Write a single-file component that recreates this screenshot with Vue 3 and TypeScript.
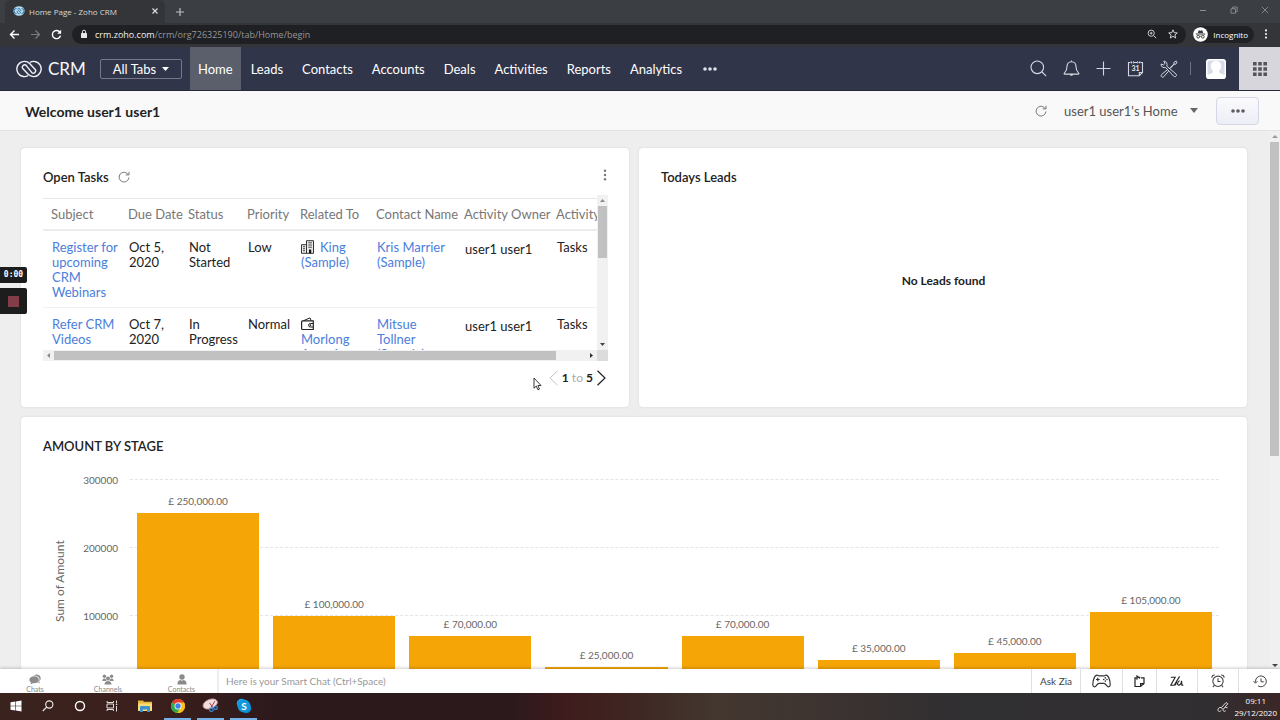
<script setup lang="ts">
interface Task {
  subject: string
  due: string
  status: string
  priority: string
  icon: 'building' | 'wallet'
  related: string
  contact: string
  owner: string
  type: string
}

interface Stage {
  label: string
  value: number
}

const tabs: string[] = ['Home', 'Leads', 'Contacts', 'Accounts', 'Deals', 'Activities', 'Reports', 'Analytics']

const columns: string[] = ['Subject', 'Due Date', 'Status', 'Priority', 'Related To', 'Contact Name', 'Activity Owner', 'Activity']

const tasks: Task[] = [
  {
    subject: 'Register for upcoming CRM Webinars',
    due: 'Oct 5, 2020',
    status: 'Not Started',
    priority: 'Low',
    icon: 'building',
    related: 'King (Sample)',
    contact: 'Kris Marrier (Sample)',
    owner: 'user1 user1',
    type: 'Tasks',
  },
  {
    subject: 'Refer CRM Videos',
    due: 'Oct 7, 2020',
    status: 'In Progress',
    priority: 'Normal',
    icon: 'wallet',
    related: 'Morlong Associates',
    contact: 'Mitsue Tollner (Sample)',
    owner: 'user1 user1',
    type: 'Tasks',
  },
]

const ticks: number[] = [300000, 200000, 100000]

const stages: Stage[] = [
  { label: '£ 250,000.00', value: 250000 },
  { label: '£ 100,000.00', value: 100000 },
  { label: '£ 70,000.00', value: 70000 },
  { label: '£ 25,000.00', value: 25000 },
  { label: '£ 70,000.00', value: 70000 },
  { label: '£ 35,000.00', value: 35000 },
  { label: '£ 45,000.00', value: 45000 },
  { label: '£ 105,000.00', value: 105000 },
]

const barHeight = (value: number): string => `${(value / 300000) * 100}%`
</script>

<template>
  <div class="screen">
    <div class="tabstrip">
      <div class="browser-tab">
        <svg width="12" height="12" viewBox="0 0 12 12">
          <ellipse cx="6" cy="6" rx="5.6" ry="4.8" fill="#b9dbef" />
          <path d="M3.6 3.4a2.6 2.6 0 1 0 0 5.2M8.4 3.4a2.6 2.6 0 1 1 0 5.2M4.4 4.2l3.4 3.6M5 3.2c1.4 0 3 1.6 3 3M4 6c0 1.4 1.4 2.8 2.8 2.8" fill="none" stroke="#2f78ad" stroke-width="1" />
        </svg>
        <span class="tab-title">Home Page - Zoho CRM</span>
        <button class="bare" aria-label="Close tab">
          <svg width="8" height="8" viewBox="0 0 8 8"><path d="M1.5 1.5l5 5M6.5 1.5l-5 5" stroke="#dcdcdc" stroke-width="1.2" /></svg>
        </button>
      </div>
      <button class="bare new-tab" aria-label="New tab">
        <svg width="10" height="10" viewBox="0 0 10 10"><path d="M5 1v8M1 5h8" stroke="#bfc1c4" stroke-width="1.2" /></svg>
      </button>
      <div class="window-buttons">
        <button class="bare" aria-label="Minimize">
          <svg width="8" height="8" viewBox="0 0 8 8"><path d="M1 4.5h6" stroke="#8d8f92" /></svg>
        </button>
        <button class="bare" aria-label="Restore">
          <svg width="8" height="8" viewBox="0 0 8 8"><path d="M1 2.7h4.5v4.5H1zM2.6 2.7V1h4.6v4.6H5.5" fill="none" stroke="#8d8f92" stroke-width=".9" /></svg>
        </button>
        <button class="bare" aria-label="Close">
          <svg width="8" height="8" viewBox="0 0 8 8"><path d="M.8.8l6.4 6.4M7.2.8L.8 7.2" stroke="#8d8f92" stroke-width=".9" /></svg>
        </button>
      </div>
    </div>

    <div class="toolbar">
      <button class="bare" aria-label="Back">
        <svg width="11" height="11" viewBox="0 0 11 11"><path d="M10 5.5H1.5M5.5 1.5l-4 4 4 4" fill="none" stroke="#fff" stroke-width="1.4" /></svg>
      </button>
      <button class="bare" aria-label="Forward">
        <svg width="11" height="11" viewBox="0 0 11 11"><path d="M1 5.5h8.500M5.500 1.500l4 4-4 4" fill="none" stroke="#7b7c7f" stroke-width="1.2" /></svg>
      </button>
      <button class="bare" aria-label="Reload">
        <svg width="11" height="11" viewBox="0 0 11 11"><path d="M8.9 3.2A4.1 4.1 0 1 0 9.5 6.6" fill="none" stroke="#fff" stroke-width="1.4" /><path d="M10.1.8v4H6.2z" fill="#fff" /></svg>
      </button>
      <div class="address">
        <svg width="8" height="10" viewBox="0 0 8 10"><rect x="1" y="4" width="6" height="5" rx=".6" fill="#e8e8e8" /><path d="M2.4 4.2V2.8a1.6 1.6 0 0 1 3.2 0v1.4" fill="none" stroke="#e8e8e8" stroke-width="1" /></svg>
        <span class="url"><b>crm.zoho.com</b>/crm/org726325190/tab/Home/begin</span>
        <button class="bare" aria-label="Zoom">
          <svg width="10" height="10" viewBox="0 0 10 10"><circle cx="4.2" cy="4.2" r="3.1" fill="none" stroke="#c9cacc" /><path d="M6.5 6.5L9.2 9.2M4.2 2.9v2.6M2.9 4.2h2.6" stroke="#c9cacc" stroke-width="1" /></svg>
        </button>
        <button class="bare" aria-label="Bookmark">
          <svg width="10" height="10" viewBox="0 0 10 10"><path d="M5 .8l1.200 2.900 3.100.2-2.400 2 .8 3.100L5 7.300 2.300 9l.8-3.100-2.400-2 3.100-.2z" fill="none" stroke="#e2e2e2" stroke-width=".9" /></svg>
        </button>
      </div>
      <div class="incognito">
        <svg width="15" height="15" viewBox="0 0 15 15">
          <circle cx="7.5" cy="7.5" r="7.3" fill="#fff" />
          <path d="M4.8 6.1l.9-2.9 1.8.5 1.8-.5.9 2.9zM2.8 6.5h9.4v1H2.8z" fill="#35363a" />
          <circle cx="5.2" cy="9.7" r="1.4" fill="none" stroke="#35363a" stroke-width=".9" />
          <circle cx="9.8" cy="9.7" r="1.4" fill="none" stroke="#35363a" stroke-width=".9" />
          <path d="M6.6 9.5q.9-.5 1.8 0" fill="none" stroke="#35363a" stroke-width=".8" />
        </svg>
        <span>Incognito</span>
      </div>
      <button class="bare browser-menu" aria-label="Browser menu">
        <svg width="4" height="12" viewBox="0 0 4 12"><g fill="#eee"><circle cx="2" cy="2.4" r="1.1" /><circle cx="2" cy="6" r="1.1" /><circle cx="2" cy="9.6" r="1.1" /></g></svg>
      </button>
    </div>

    <header class="nav">
      <a class="brand" href="#">
        <svg width="26" height="18" viewBox="0 0 26 18">
          <g fill="none" stroke="#f1f2f6" stroke-width="1.4" stroke-linecap="round" stroke-linejoin="round">
            <path d="M11.6 15.900A7.600 7.600 0 1 1 13.600 3.400L19 9.200a2.300 2.300 0 0 1-3.300 3.200L10.300 5.600" />
            <path d="M14.400 2.100A7.600 7.600 0 1 1 12.400 14.600L7 8.800a2.300 2.300 0 0 1 3.300-3.200" />
          </g>
        </svg>
        <span>CRM</span>
      </a>
      <button class="all-tabs">
        All Tabs
        <svg width="7" height="4" viewBox="0 0 7 4"><path d="M0 0h7L3.5 4z" fill="#fff" /></svg>
      </button>
      <nav class="links">
        <a v-for="(tab, i) in tabs" :key="tab" href="#" :class="{ active: i === 0 }">{{ tab }}</a>
        <button class="bare more" aria-label="More tabs">
          <svg width="14" height="4" viewBox="0 0 14 4"><g fill="#dfe1ea"><circle cx="2" cy="2" r="1.8" /><circle cx="7" cy="2" r="1.8" /><circle cx="12" cy="2" r="1.8" /></g></svg>
        </button>
      </nav>
      <div class="tools">
        <button class="bare" aria-label="Search">
          <svg width="17" height="17" viewBox="0 0 17 17" fill="none" stroke="#d5d7e0" stroke-width="1.1"><circle cx="7.3" cy="7.3" r="6.3" /><path d="M12 12l4.2 4.2" /></svg>
        </button>
        <button class="bare" aria-label="Notifications">
          <svg width="17" height="17" viewBox="0 0 17 17" fill="none" stroke="#d5d7e0" stroke-width="1.1"><path d="M8.5 1.8c-3 0-4.500 2.200-4.500 4.800 0 4-1.300 5.300-2.600 6.500-.6.600-.3 1 .3 1h13.600c.6 0 .9-.4.3-1C14.300 11.900 13 10.600 13 6.600c0-2.600-1.500-4.800-4.500-4.800z" /><path d="M7.300 14.500a1.300 1.300 0 0 0 2.400 0z" fill="#d5d7e0" /><path d="M8.500.5v1.300" /></svg>
        </button>
        <button class="bare" aria-label="Create">
          <svg width="15" height="15" viewBox="0 0 15 15"><path d="M7.500.5v14M.5 7.500h14" stroke="#d5d7e0" stroke-width="1.1" /></svg>
        </button>
        <button class="bare" aria-label="Calendar">
          <svg width="17" height="17" viewBox="0 0 17 17" fill="none" stroke="#d5d7e0" stroke-width="1.1"><path d="M3 2.500H1.500v13.200h10.800l3.200-3.200v-10h-1.700M12.300 15.500v-3h3" /><path d="M3.500 2.500h1.800M6.700 2.500h3.400M11.500 2.500h2" /><path d="M4.300 1v2.600M6.500 1v2.600M10.500 1v2.600M12.800 1v2.600" stroke-width=".7" /><text x="8.500" y="10.600" text-anchor="middle" class="cal-day">31</text></svg>
        </button>
        <button class="bare" aria-label="Setup">
          <svg width="18" height="18" viewBox="0 0 18 18" fill="none" stroke="#d5d7e0" stroke-width="1"><path d="M6.800 6.200c.8-2-.1-4.500-2.500-5.100L3.800 1l1.100 2.500-1.500 1.400L1 4c0 2.600 2.300 4.300 4.700 3.600l8 8.600c1.600 1.500 3.800-.6 2.300-2.200z" /><path d="M7.300 9.800l-5.700 4.700c-1.500 1.500.6 3.700 2.200 2.200l4.700-5.500M9.600 8.300l4.200-4.200.2-1.800L16.200 1l.9.900-1.200 2.200-1.800.2-3.900 4.200" /></svg>
        </button>
        <span class="divider"></span>
        <button class="avatar" aria-label="Profile">
          <svg width="20" height="20" viewBox="0 0 20 20"><rect width="20" height="20" fill="#d9dbe6" /><path d="M10 2c-3.600 0-5.200 2.200-5.100 5.200.1 2.300 1 4.100 2.200 5.200-.3 1.800-1.700 2.100-4 2.900-1.900.6-2.600 2.100-2.600 4.700h19c0-2.600-.7-4.100-2.600-4.700-2.300-.8-3.700-1.100-4-2.900 1.200-1.100 2.100-2.900 2.200-5.200C15.200 4.200 13.600 2 10 2z" fill="#fff" /><rect x=".75" y=".75" width="18.500" height="18.500" rx="3" fill="none" stroke="#fff" stroke-width="1.500" /></svg>
        </button>
      </div>
      <button class="apps" aria-label="Apps">
        <svg width="14" height="14" viewBox="0 0 14 14" fill="#545459"><path d="M0 0h3.600v3.600H0zM5.200 0h3.600v3.600H5.200zM10.400 0H14v3.600h-3.600zM0 5.200h3.600v3.600H0zM5.200 5.200h3.600v3.600H5.200zM10.400 5.200H14v3.600h-3.600zM0 10.400h3.600V14H0zM5.200 10.400h3.600V14H5.200zM10.400 10.400H14V14h-3.600z" /></svg>
      </button>
    </header>

    <div class="subheader">
      <h1>Welcome user1 user1</h1>
      <button class="bare" aria-label="Refresh">
        <svg width="12" height="12" viewBox="0 0 12 12" fill="none" stroke="#777"><path d="M10.200 3.600A4.900 4.900 0 1 0 10.900 6.500" /><path d="M11 .8v3.100H7.800" /></svg>
      </button>
      <label class="home-picker">
        <select aria-label="Home view">
          <option>user1 user1's Home</option>
        </select>
        <svg width="8" height="5" viewBox="0 0 8 5"><path d="M0 0h8L4 5z" fill="#666" /></svg>
      </label>
      <button class="options" aria-label="Options">
        <svg width="14" height="4" viewBox="0 0 14 4"><g fill="#5c5c62"><circle cx="2" cy="2" r="1.8" /><circle cx="7" cy="2" r="1.8" /><circle cx="12" cy="2" r="1.8" /></g></svg>
      </button>
    </div>

    <div class="content">
      <main class="board">
        <section class="card tasks">
          <div class="card-head">
            <h2>Open Tasks</h2>
            <button class="bare" aria-label="Refresh tasks">
              <svg width="12" height="12" viewBox="0 0 12 12" fill="none" stroke="#777"><path d="M10.200 3.600A4.900 4.900 0 1 0 10.900 6.500" /><path d="M11 .8v3.100H7.800" /></svg>
            </button>
            <button class="bare card-menu" aria-label="Task options">
              <svg width="4" height="12" viewBox="0 0 4 12"><g fill="#777"><circle cx="2" cy="1.8" r="1.2" /><circle cx="2" cy="6" r="1.2" /><circle cx="2" cy="10.200" r="1.2" /></g></svg>
            </button>
          </div>
          <div class="scroller">
            <div class="view">
              <table>
                <colgroup>
                  <col v-for="(c, i) in columns" :key="c" :class="'col' + i" />
                </colgroup>
                <thead>
                  <tr>
                    <th v-for="c in columns" :key="c">{{ c }}</th>
                  </tr>
                </thead>
                <tbody>
                  <tr v-for="task in tasks" :key="task.subject">
                    <td><a href="#">{{ task.subject }}</a></td>
                    <td>{{ task.due }}</td>
                    <td>{{ task.status }}</td>
                    <td>{{ task.priority }}</td>
                    <td class="related">
                      <svg v-if="task.icon === 'building'" class="kind" width="13" height="14" viewBox="0 0 13 14">
                        <path d="M5.500 13.300V.7h7v12.600zM5.500 4.700h-5v8.600h5z" fill="#e9e9e9" stroke="#333" />
                        <path d="M7.300 2.800h3.600M7.300 5h3.600M7.300 7.200h3.600M2 6.700h2M2 8.700h2M2 10.700h2" stroke="#333" stroke-width=".9" />
                        <path d="M8 9.500h2.200v3.800H8z" fill="#111" />
                      </svg>
                      <svg v-else class="kind" width="13" height="14" viewBox="0 0 13 14" fill="none" stroke="#222">
                        <path d="M1.600 3.900h10.700v8.600H1.600c-.7 0-1-.4-1-1V4.900c0-.6.4-1 1-1z" stroke-width="1.200" /><path d="M2.500 3.700L9 .9l1.200 2.800M12.200 6.500H9.300a1.700 1.700 0 0 0 0 3.500h2.900" /><circle cx="9.400" cy="8.200" r=".5" fill="#222" />
                      </svg>
                      <a href="#">{{ task.related }}</a>
                    </td>
                    <td><a href="#">{{ task.contact }}</a></td>
                    <td class="owner">{{ task.owner }}</td>
                    <td>{{ task.type }}</td>
                  </tr>
                </tbody>
              </table>
            </div>
            <div class="vbar">
              <svg width="5" height="3" viewBox="0 0 5 3"><path d="M0 3h5L2.500 0z" fill="#8a8a8a" /></svg>
              <span class="vthumb"></span>
              <svg width="5" height="3" viewBox="0 0 5 3"><path d="M0 0h5L2.500 3z" fill="#444" /></svg>
            </div>
            <div class="hbar">
              <svg width="3" height="5" viewBox="0 0 3 5"><path d="M3 0v5L0 2.500z" fill="#8a8a8a" /></svg>
              <span class="hthumb"></span>
              <svg width="3" height="5" viewBox="0 0 3 5"><path d="M0 0v5l3-2.500z" fill="#333" /></svg>
            </div>
            <div class="corner"></div>
          </div>
          <div class="pager">
            <button class="bare" aria-label="Previous page">
              <svg width="9" height="16" viewBox="0 0 9 16"><path d="M8.500.8L1 8l7.500 7.200" fill="none" stroke="#c4c4c4" /></svg>
            </button>
            <span><b>1</b> to <b>5</b></span>
            <button class="bare" aria-label="Next page">
              <svg width="9" height="16" viewBox="0 0 9 16"><path d="M.5.800L8 8 .5 15.200" fill="none" stroke="#222" stroke-width="1.2" /></svg>
            </button>
          </div>
        </section>

        <section class="card leads">
          <h2>Todays Leads</h2>
          <p>No Leads found</p>
        </section>

        <section class="card stage">
          <h2>AMOUNT BY STAGE</h2>
          <div class="chart">
            <span class="axis-title">Sum of Amount</span>
            <div class="ticks">
              <span v-for="t in ticks" :key="t">{{ t }}</span>
            </div>
            <div class="plot">
              <div class="lines"><i v-for="t in ticks" :key="t"></i></div>
              <div class="bars">
                <div v-for="(s, i) in stages" :key="i" class="bar-col">
                  <span>{{ s.label }}</span>
                  <div class="bar" :style="{ height: barHeight(s.value) }"></div>
                </div>
              </div>
            </div>
          </div>
        </section>
      </main>
      <div class="pagebar">
        <svg width="6" height="3" viewBox="0 0 6 3"><path d="M0 3h6L3 0z" fill="#9a9a9a" /></svg>
        <span class="pagethumb"></span>
        <svg width="6" height="3" viewBox="0 0 6 3"><path d="M0 0h6L3 3z" fill="#444" /></svg>
      </div>
    </div>

    <footer class="chatbar">
      <div class="chat-tabs">
        <button>
          <svg width="12" height="11" viewBox="0 0 12 11" fill="#8b8b8b"><path d="M5.200 2.200C2.500 2.200.4 3.700.4 5.700c0 1.200.7 2.100 1.700 2.700l-.6 2.200 2.300-1.400h1.400c2.700 0 4.600-1.500 4.600-3.500S7.900 2.200 5.200 2.200z" /><path d="M4.500 1.400C5.200.8 6.300.4 7.500.4c2.400 0 4.200 1.600 4.200 3.800 0 1.400-.6 2.500-1.600 3.200l.7 2.200-2.300-1.300c1.400-.7 2-1.700 2-3C10.500 3 8 1.400 4.500 1.400z" /></svg>
          <span>Chats</span>
        </button>
        <button>
          <svg width="12" height="11" viewBox="0 0 12 11" fill="#8b8b8b"><circle cx="2.400" cy="2.200" r="1.7" /><circle cx="9.600" cy="2.200" r="1.7" /><circle cx="6" cy="4.400" r="2" /><path d="M.3 7.500c0-2 .6-3 2.200-3 .6 0 1 .2 1.300.5.100 1 .4 1.500 1 2H.3zM11.700 7.500c0-2-.6-3-2.200-3-.6 0-1 .2-1.300.5-.1 1-.4 1.500-1 2h4.500zM2.500 10.600c0-2.400 1.300-3.600 3.500-3.600s3.500 1.200 3.500 3.600z" /></svg>
          <span>Channels</span>
        </button>
        <button>
          <svg width="12" height="11" viewBox="0 0 12 11" fill="#8b8b8b"><circle cx="6" cy="3" r="2.7" /><path d="M1.400 10.600c0-3 1-4.400 3-4.700.9.700 2.300.7 3.200 0 2 .3 3 1.700 3 4.700z" /></svg>
          <span>Contacts</span>
        </button>
      </div>
      <input type="text" aria-label="Smart Chat" placeholder="Here is your Smart Chat (Ctrl+Space)" />
      <button class="cell zia">Ask Zia</button>
      <button class="cell games" aria-label="Games">
        <svg width="19" height="14" viewBox="0 0 19 14" fill="none" stroke="#333" stroke-width="1.2"><path d="M5 1.200c.8 0 1.200.7 2 .7h5c.8 0 1.200-.7 2-.7 2.600 0 4.200 5.600 4.200 9.200 0 2.900-2.300 2.900-3.500 1.300-.9-1.200-1.500-2.300-2.700-2.300H7c-1.200 0-1.800 1.100-2.700 2.300-1.200 1.600-3.500 1.600-3.500-1.300C.8 6.800 2.400 1.200 5 1.200z" /><path d="M5.800 3.700v3.600M4 5.500h3.600" /><g fill="#333" stroke="none"><circle cx="13.300" cy="3.900" r=".8" /><circle cx="13.300" cy="7.100" r=".8" /><circle cx="11.700" cy="5.500" r=".8" /><circle cx="14.900" cy="5.500" r=".8" /></g></svg>
      </button>
      <button class="cell notes" aria-label="Notes">
        <svg width="11" height="13" viewBox="0 0 11 13" fill="none" stroke="#222" stroke-width="1.2"><path d="M2.800 2.800H1v8.700h5.500l3.500-3V2.800H7" /><path d="M3 4.800V1l2.400 2L6 1.700M6.600 11.400V8.700H10" /></svg>
      </button>
      <button class="cell suggest" aria-label="Zia suggestions">
        <svg width="14" height="12" viewBox="0 0 14 12" fill="none" stroke="#222" stroke-width="1.100"><path d="M.8 2.200h4.400L.8 10.200h3.400L9.600 1.400M7.200 5.300L5.400 10.200M9.800 5.800c-1.800 0-3.300 4.300-1.200 4.300 1.500 0 2.700-2.400 3-4.300l.2 4.300h1.500" /></svg>
      </button>
      <button class="cell alarm" aria-label="Reminders">
        <svg width="14" height="14" viewBox="0 0 13 13" fill="none" stroke="#444"><circle cx="6.500" cy="6.800" r="4.800" /><path d="M6.500 4v3h2.300M.8 3.500C.8 2 2 .9 3.500.9M12.200 3.500C12.200 2 11 .9 9.500.9M3.200 10.400l-1.400 1.800M9.800 10.400l1.400 1.800" /></svg>
      </button>
      <button class="cell recent" aria-label="Recent items">
        <svg width="14" height="13" viewBox="0 0 14 13" fill="none" stroke="#444"><path d="M2.500 7.500V6.300A5.400 5.400 0 1 1 5 10.900M8 3.500v3.300h2.800" /><path d="M.6 6.200l1.900 2 1.900-2" /></svg>
      </button>
    </footer>

    <div class="taskbar">
      <button aria-label="Start">
        <svg width="12" height="12" viewBox="0 0 12 12" fill="#fff"><path d="M.5 2.200L5.300 1.500v4.200H.5zM5.900 1.400L11.500.6v5.100H5.900zM.5 6.300h4.800v4.200L.5 9.800zM5.900 6.300h5.600v5.100l-5.600-.8z" /></svg>
      </button>
      <button aria-label="Search">
        <svg width="12" height="12" viewBox="0 0 12 12" fill="none" stroke="#eee" stroke-width="1.1"><circle cx="7.300" cy="4.500" r="3.6" /><path d="M4.700 7.100L.8 11" /></svg>
      </button>
      <button aria-label="Cortana">
        <svg width="12" height="12" viewBox="0 0 12 12"><circle cx="6" cy="6" r="4.500" fill="none" stroke="#fff" stroke-width="1.4" /></svg>
      </button>
      <button aria-label="Task view">
        <svg width="12" height="12" viewBox="0 0 12 12" fill="none" stroke="#ddd"><path d="M1 1v1.500h6.500V1M1 11V9.500h6.500V11M1 4h6.500v4H1zM10.500.5v3M10.500 6v5.500M9.800 4.500h1.500" /></svg>
      </button>
      <button class="wide" aria-label="File Explorer">
        <svg width="16" height="14" viewBox="0 0 16 14"><path d="M1 1.500h5l1 1.300h8V12H1z" fill="#e8b93b" /><path d="M1 4.500h14V12H1z" fill="#fbdc79" /><path d="M3 13V8.300c0-.8.500-1.300 1.300-1.300h7.400c.8 0 1.300.5 1.300 1.300V13h-2.800v-2.600H5.800V13z" fill="#3c94cf" /></svg>
      </button>
      <button class="wide open" aria-label="Chrome">
        <svg width="16" height="16" viewBox="0 0 16 16"><circle cx="8" cy="8" r="7" fill="#fbc116" /><path d="M8 8L1.900 4.600A7 7 0 0 1 14.100 4.600z" fill="#e33b2e" /><path d="M1.900 4.600A7 7 0 0 0 7.300 15l3.300-5.500L8 8z" fill="#2da94f" /><path d="M8 4.600h6.100A7 7 0 0 1 7.300 15l3.500-5.500z" fill="#fbc116" /><circle cx="8" cy="8" r="3.500" fill="#fff" /><circle cx="8" cy="8" r="2.700" fill="#3f7fe8" /></svg>
      </button>
      <button class="wide open" aria-label="Snipping Tool">
        <svg width="17" height="15" viewBox="0 0 17 15"><ellipse cx="8.200" cy="6" rx="7.500" ry="4.600" transform="rotate(-22 8.200 6)" fill="#f0dfe1" stroke="#c68f92" stroke-width=".8" /><path d="M7.500 4.800l3.500 5M13 3L9.300 9" stroke="#a33c46" stroke-width="1" /><g fill="none" stroke="#3f83c4" stroke-width="1.3"><circle cx="9.300" cy="11.800" r="1.8" /><circle cx="13.700" cy="9.800" r="1.7" /></g></svg>
      </button>
      <button class="wide open" aria-label="Skype">
        <svg width="16" height="16" viewBox="0 0 16 16"><circle cx="5.500" cy="5.500" r="4.700" fill="#18a6e6" /><circle cx="10.500" cy="10.500" r="4.700" fill="#0b86cf" /><circle cx="8" cy="8" r="6.500" fill="#1198dc" /><text x="8" y="11.700" text-anchor="middle" class="skype-s">S</text></svg>
      </button>
      <div class="tray">
        <svg width="12" height="12" viewBox="0 0 12 12" fill="none" stroke="#ddd"><path d="M4.500 6.500L9 1.500l1.800 1.300L6.500 8c-.8.600-2.200-.5-2-1.500zM4.300 6.500C2 5.800.5 8 1 9.500s2.500 1.200 3-.1M6 8.300c-.3 2 1.700 2.700 2.700 1.500M8 6l2.500.8" /></svg>
        <div class="clock"><span>09:11</span><span>29/12/2020</span></div>
      </div>
    </div>

    <div class="recorder">
      <span class="timer">0:00</span>
      <button class="stop" aria-label="Stop recording"><i></i></button>
    </div>
    <svg class="pointer" width="9" height="14" viewBox="0 0 9 14"><path d="M1 1v10.200l2.300-2.100 1.600 3.700 1.600-.7-1.600-3.600H8z" fill="#fff" stroke="#222" stroke-width=".9" /></svg>
  </div>
</template>

<style>
html,
body {
  margin: 0;
  height: 100%;
}
#app {
  height: 100%;
}
</style>

<style scoped>
* {
  box-sizing: border-box;
}
.screen {
  position: relative;
  display: flex;
  flex-direction: column;
  height: 100vh;
  overflow: hidden;
  font-family: Lato, sans-serif;
  font-size: 13px;
  color: #222;
}
svg {
  display: block;
  flex: none;
}
a {
  text-decoration: none;
}
button {
  font-family: inherit;
  padding: 0;
  border: 0;
  background: none;
}
.bare {
  display: flex;
  align-items: center;
  justify-content: center;
}

/* browser chrome */
.tabstrip {
  display: flex;
  align-items: center;
  height: 23px;
  flex: none;
  background: #3b3e42;
  font-family: "Open Sans", sans-serif;
}
.browser-tab {
  display: flex;
  align-items: center;
  align-self: flex-end;
  width: 160px;
  height: 23px;
  margin-left: 5px;
  padding: 0 6px 1px 8px;
  border-radius: 6px 6px 0 0;
  background: #333538;
}
.tab-title {
  flex: 1;
  margin-left: 4px;
  font-size: 8px;
  color: #d8d9db;
}
.new-tab {
  margin-left: 10px;
}
.window-buttons {
  display: flex;
  gap: 23px;
  margin: 0 11px 3px auto;
}
.toolbar {
  display: flex;
  align-items: center;
  gap: 10px;
  height: 24px;
  flex: none;
  padding: 0 12px 2px 9px;
  background: #333538;
  font-family: "Open Sans", sans-serif;
}
.address {
  display: flex;
  flex: 1;
  align-items: center;
  gap: 11px;
  height: 19px;
  margin-right: -3px;
  padding: 0 8px;
  border-radius: 10px;
  background: #1f2023;
}
.url {
  flex: 1;
  margin-left: -4px;
  font-size: 9px;
  color: #94969a;
}
.url b {
  font-weight: 400;
  color: #f0f0f0;
}
.incognito {
  display: flex;
  align-items: center;
  gap: 5px;
  height: 17px;
  padding-right: 6px;
  border-radius: 9px;
  background: #202124;
  font-size: 8px;
  color: #fff;
}

/* main navigation */
.nav {
  display: flex;
  align-items: center;
  height: 44px;
  flex: none;
  border-bottom: 1px solid #26293a;
  background: #313549;
}
.brand {
  display: flex;
  align-items: center;
  gap: 6px;
  width: 84px;
  margin-left: 16px;
  font-size: 17px;
  color: #f5f6fa;
}
.all-tabs {
  display: flex;
  align-items: center;
  justify-content: center;
  gap: 6px;
  width: 82px;
  height: 20px;
  border: 1px solid #747889;
  border-radius: 2px;
  font-size: 13px;
  color: #fff;
}
.links {
  display: flex;
  gap: 2px;
  align-self: stretch;
  margin-left: 8px;
}
.links a {
  display: flex;
  align-items: center;
  padding: 0 9px 0 8px;
  font-size: 13px;
  color: #fff;
}
.links a.active {
  padding: 0 8px;
  background: #5a5f6b;
}
.more {
  margin-left: 10px;
}
.tools {
  display: flex;
  align-items: center;
  gap: 16px;
  margin-left: auto;
}
.cal-day {
  font-family: Lato, sans-serif;
  font-size: 7px;
  font-weight: 700;
  fill: #e8e9ee;
  stroke: none;
}
.divider {
  width: 1px;
  height: 13px;
  margin-right: -1px;
  margin-left: -4px;
  background: #6d7182;
}
.avatar {
  overflow: hidden;
  border-radius: 3px;
}
.apps {
  display: flex;
  align-items: center;
  justify-content: center;
  align-self: stretch;
  width: 41px;
  margin-left: 13px;
  background: #d6d6dc;
}
.subheader {
  display: flex;
  align-items: center;
  height: 40px;
  flex: none;
  padding: 0 21px 0 25px;
  border-bottom: 1px solid #e2e2e2;
  background: #f9f9f9;
}
.subheader h1 {
  flex: 1;
  margin: 0;
  padding-top: 2px;
  font-size: 14px;
  font-weight: 700;
}
.home-picker {
  display: grid;
  align-items: center;
  width: 134px;
  margin: 0 18px 0 17px;
}
.home-picker select,
.home-picker svg {
  grid-area: 1 / 1;
}
.home-picker svg {
  justify-self: end;
  pointer-events: none;
}
.home-picker select {
  appearance: none;
  padding: 0;
  border: 0;
  background: none;
  font-family: inherit;
  font-size: 13px;
  color: #555;
}
.options {
  display: flex;
  align-items: center;
  justify-content: center;
  width: 43px;
  height: 28px;
  border: 1px solid #d3d7e6;
  border-radius: 4px;
  background: linear-gradient(#fbfbfd, #eceef6);
}

/* dashboard */
.content {
  display: flex;
  flex: 1;
  min-height: 0;
  overflow: hidden;
  background: #eee;
}
.board {
  display: grid;
  flex: 1;
  grid-template-columns: 1fr 1fr;
  align-content: start;
  gap: 10px;
  padding: 17px 22px 0 21px;
}
.card {
  min-width: 0;
  padding: 20px 21px 0 22px;
  border-radius: 4px;
  background: #fff;
  box-shadow: 0 0 2px #d0d0d0;
}
h2 {
  margin: 0;
  font-size: 13px;
  font-weight: 600;
  line-height: 18px;
}
.card-head {
  display: flex;
  align-items: center;
  gap: 9px;
}
.card-menu {
  margin: 0 1px 4px auto;
}
.scroller {
  display: grid;
  grid-template: 155px 11px / 1fr 11px;
  margin-top: 9px;
}
.view {
  padding-top: 3px;
  overflow: hidden;
}
table {
  width: 600px;
  table-layout: fixed;
  border-collapse: separate;
  border-spacing: 0;
}
.col0 { width: 77px; }
.col1 { width: 60px; }
.col2 { width: 59px; }
.col3 { width: 53px; }
.col4 { width: 76px; }
.col5 { width: 88px; }
.col6 { width: 92px; }
.col7 { width: 95px; }
th {
  height: 33px;
  padding: 0 0 0 8px;
  border-top: 1px solid #e8e8e8;
  border-bottom: 2px solid #ececec;
  font-weight: 400;
  text-align: left;
  white-space: nowrap;
  color: #777;
}
td {
  height: 77px;
  padding: 9px 0 7px 9px;
  border-bottom: 1px solid #f0f0f0;
  line-height: 15px;
  vertical-align: top;
}
td.related {
  padding-right: 3px;
}
td.owner {
  padding-top: 11px;
}
td a {
  color: #4a7edb;
}
.kind {
  display: inline-block;
  height: 14px;
  margin-right: 6px;
  vertical-align: -2px;
}
.vbar,
.hbar {
  display: flex;
  align-items: center;
  background: #f1f1f1;
}
.vbar {
  flex-direction: column;
  gap: 4px;
  padding: 4px 0;
}
.vthumb {
  width: 9px;
  height: 52px;
  margin-bottom: auto;
  background: #c1c1c1;
}
.hbar {
  gap: 4px;
  padding: 0 4px;
}
.hthumb {
  width: 92%;
  height: 9px;
  margin-right: auto;
  background: #c1c1c1;
}
.corner {
  background: #dcdcdc;
}
.pager {
  display: flex;
  align-items: center;
  justify-content: flex-end;
  gap: 4px;
  margin: 9px 2px 0;
  font-size: 12px;
  line-height: 16px;
  color: #aaa;
}
.pager b {
  color: #222;
}
.leads {
  display: flex;
  flex-direction: column;
}
.leads p {
  margin: 86px 0 0;
  font-size: 12px;
  font-weight: 700;
  line-height: 18px;
  text-align: center;
}
.tasks {
  height: 259px;
}
.stage {
  grid-column: 1 / -1;
  height: 340px;
}
.chart {
  display: flex;
  height: 205px;
  margin-top: 24px;
}
.axis-title {
  height: 205px;
  width: 34px;
  line-height: 34px;
  writing-mode: vertical-rl;
  transform: rotate(180deg);
  text-align: center;
  font-size: 12px;
  color: #666;
}
.ticks {
  width: 41px;
  font-size: 10px;
  text-align: right;
  color: #666;
}
.ticks span {
  display: block;
  height: 68px;
  line-height: 2px;
}
.plot {
  display: grid;
  flex: 1;
  margin: 0 7px 0 12px;
}
.lines,
.bars {
  grid-area: 1 / 1;
}
.lines i {
  display: block;
  height: 68px;
  border-top: 1px dashed #e4e4e4;
}
.bars {
  display: flex;
  height: 205px;
}
.bar-col {
  display: flex;
  flex: 1;
  flex-direction: column;
  align-items: center;
  justify-content: flex-end;
  height: 205px;
  padding: 0 7px;
}
.bar-col span {
  margin-bottom: 5px;
  font-size: 10px;
  line-height: 14px;
  white-space: nowrap;
  color: #666;
}
.bar {
  flex: none;
  width: 100%;
  background: #f5a506;
}
.pagebar {
  display: flex;
  flex-direction: column;
  align-items: center;
  gap: 4px;
  width: 11px;
  padding: 4px 0 2px;
  background: #f0f0f0;
}
.pagethumb {
  width: 9px;
  height: 59%;
  margin-bottom: auto;
  background: #c1c1c1;
}

/* chat bar */
.chatbar {
  z-index: 1;
  display: flex;
  height: 24px;
  flex: none;
  background: #fff;
  box-shadow: 0 -1px 3px rgba(0, 0, 0, 0.2);
}
.chat-tabs {
  display: grid;
  grid-template-columns: 70px 76px 1fr;
  width: 219px;
  border-right: 2px solid #eee;
}
.chat-tabs button {
  display: flex;
  flex-direction: column;
  align-items: center;
  padding-top: 5px;
  font-size: 7px;
  line-height: 8px;
  color: #888;
}
.chatbar input {
  flex: 1;
  min-width: 0;
  padding: 0 7px;
  border: 0;
  outline: 0;
  font-family: inherit;
  font-size: 10px;
}
.chatbar input::placeholder {
  color: #999;
}
.cell {
  display: flex;
  align-items: center;
  justify-content: center;
  border-left: 1px solid #e0e0e0;
  color: #444;
}
.zia {
  width: 49px;
  font-size: 10px;
}
.games,
.recent {
  width: 42px;
}
.notes {
  width: 34px;
}
.suggest,
.alarm {
  width: 41px;
}

/* desktop taskbar */
.taskbar {
  z-index: 1;
  display: flex;
  height: 27px;
  flex: none;
  background: linear-gradient(90deg, #3a231f 0, #3b1f1c 12%, #2c191c 22%, #2c191c 40%, #3e1b1c 44%, #3f2823 50%, #43372f 56%, #3f3531 62%, #383130 68%, #302f32 76%, #302e31 94%, #3b2727 100%);
}
.taskbar button {
  display: flex;
  align-items: center;
  justify-content: center;
  width: 27px;
  margin-left: 5px;
  border-bottom: 2px solid transparent;
}
.taskbar button:first-child {
  margin-left: 2px;
}
.taskbar button.wide {
  margin-left: 6px;
}
.taskbar button.open {
  border-bottom-color: #76b0e8;
}
.skype-s {
  font-family: Lato, sans-serif;
  font-size: 10px;
  font-weight: 700;
  fill: #fff;
}
.tray {
  display: flex;
  align-items: center;
  gap: 6px;
  margin-left: auto;
  padding-right: 3px;
}
.clock {
  display: flex;
  flex-direction: column;
  align-items: center;
  font-family: "Open Sans", sans-serif;
  font-size: 8px;
  line-height: 12px;
  color: #fff;
}

/* overlays */
.recorder {
  position: absolute;
  top: 267px;
  left: 0;
  display: flex;
  flex-direction: column;
  gap: 5px;
  width: 27px;
}
.timer {
  height: 16px;
  border-radius: 0 2px 2px 0;
  background: #1d1d1d;
  font-family: "DejaVu Sans Mono", monospace;
  font-size: 8px;
  font-weight: 700;
  line-height: 16px;
  text-align: center;
  color: #fff;
}
.stop {
  display: flex;
  align-items: center;
  justify-content: center;
  height: 26px;
  border-radius: 0 2px 2px 0;
  background: #1d1d1d;
}
.stop i {
  width: 11px;
  height: 11px;
  background: #833d49;
}
.pointer {
  position: absolute;
  top: 377px;
  left: 533px;
}
</style>
